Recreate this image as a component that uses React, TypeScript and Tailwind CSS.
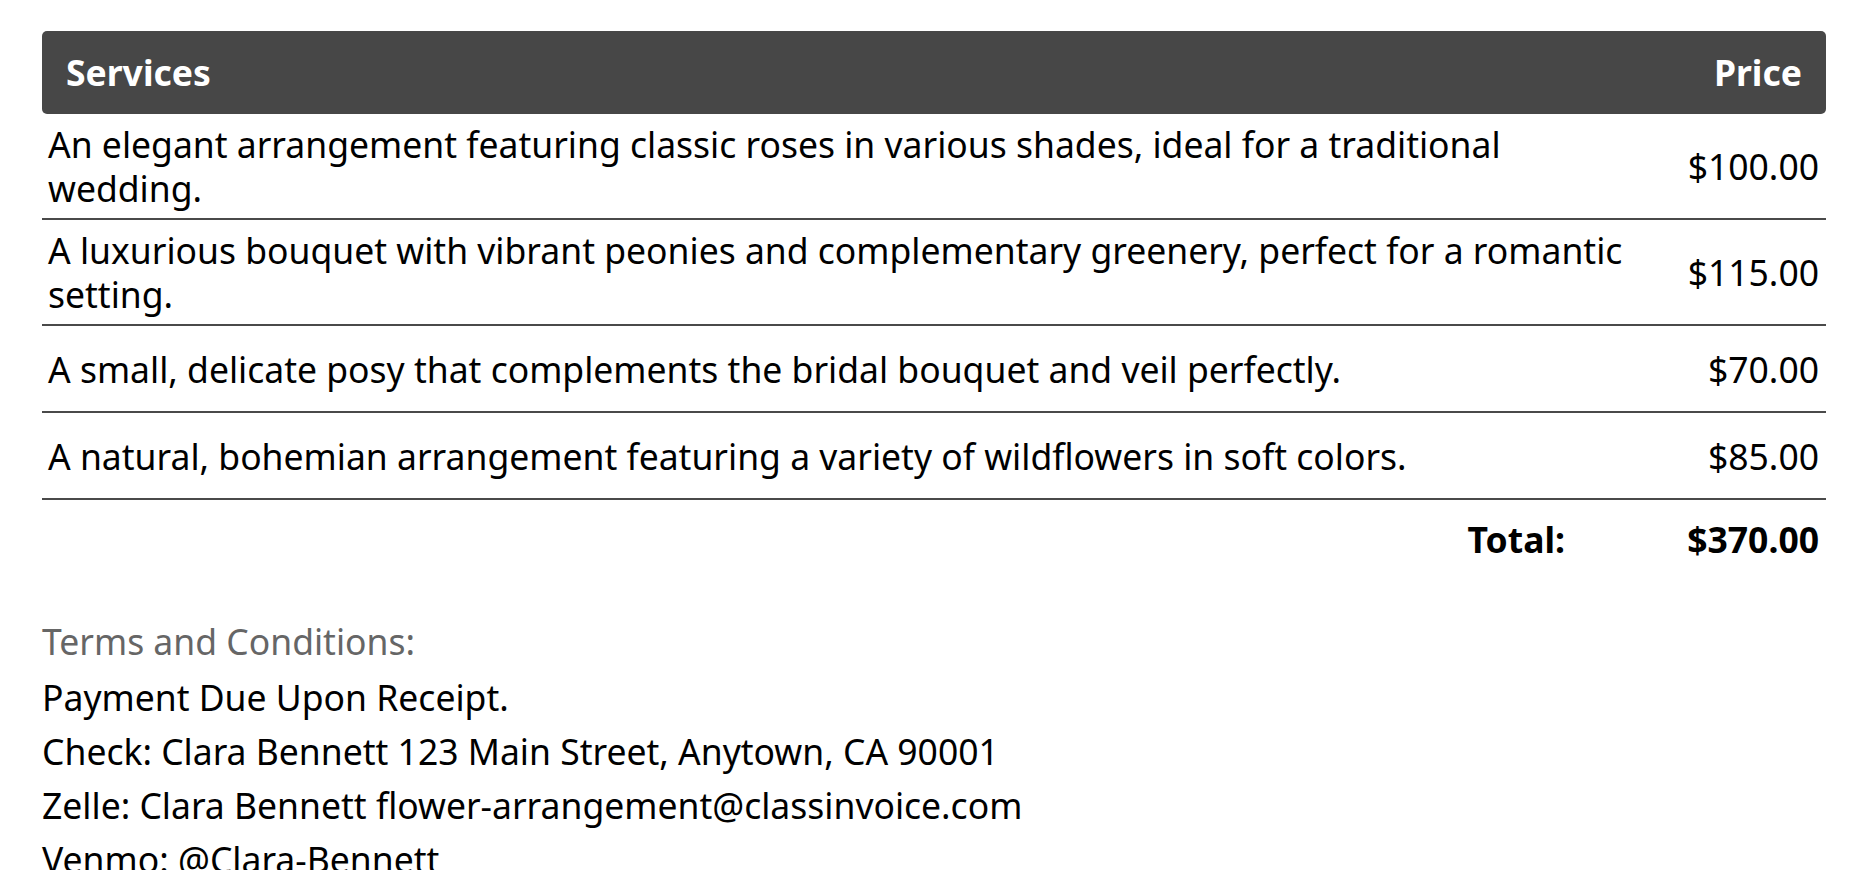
import React from 'react';

interface ServiceItem {
  description: string;
  price: number;
}

const services: ServiceItem[] = [
  {
    description:
      'An elegant arrangement featuring classic roses in various shades, ideal for a traditional wedding.',
    price: 100,
  },
  {
    description:
      'A luxurious bouquet with vibrant peonies and complementary greenery, perfect for a romantic setting.',
    price: 115,
  },
  {
    description: 'A small, delicate posy that complements the bridal bouquet and veil perfectly.',
    price: 70,
  },
  {
    description: 'A natural, bohemian arrangement featuring a variety of wildflowers in soft colors.',
    price: 85,
  },
];

const terms = [
  'Payment Due Upon Receipt.',
  'Check: Clara Bennett 123 Main Street, Anytown, CA 90001',
  'Zelle: Clara Bennett flower-arrangement@classinvoice.com',
  'Venmo: @Clara-Bennett',
];

const money = (n: number) => `$${n.toFixed(2)}`;

const App: React.FC = () => {
  const total = services.reduce((sum, s) => sum + s.price, 0);

  return (
    <div className="min-h-screen bg-white px-[42px] pt-[31px] font-['Noto_Sans',sans-serif] text-[35.5px] text-black">
      {/* table head */}
      <div className="flex h-[83px] items-center justify-between rounded-[5px] bg-[#474747] px-6 font-bold text-white">
        <span>Services</span>
        <span>Price</span>
      </div>

      {/* rows */}
      {services.map((s) => (
        <div
          key={s.description}
          className="flex min-h-[87px] items-center border-b-2 border-[#4a4a4a] py-2 leading-[44px]"
        >
          <div className="flex-1 pl-[6px] pr-2">{s.description}</div>
          <div className="w-[160px] shrink-0 pr-[7px] text-right">{money(s.price)}</div>
        </div>
      ))}

      {/* total */}
      <div className="flex h-[80px] items-center justify-end pr-[7px] font-bold">
        <span>Total:</span>
        <span className="w-[254px] text-right">{money(total)}</span>
      </div>

      {/* terms */}
      <div className="mt-[34px] leading-[54px]">
        <div className="mb-[2px] text-[#666666]">Terms and Conditions:</div>
        {terms.map((t) => (
          <div key={t}>{t}</div>
        ))}
      </div>
    </div>
  );
};

export default App;
